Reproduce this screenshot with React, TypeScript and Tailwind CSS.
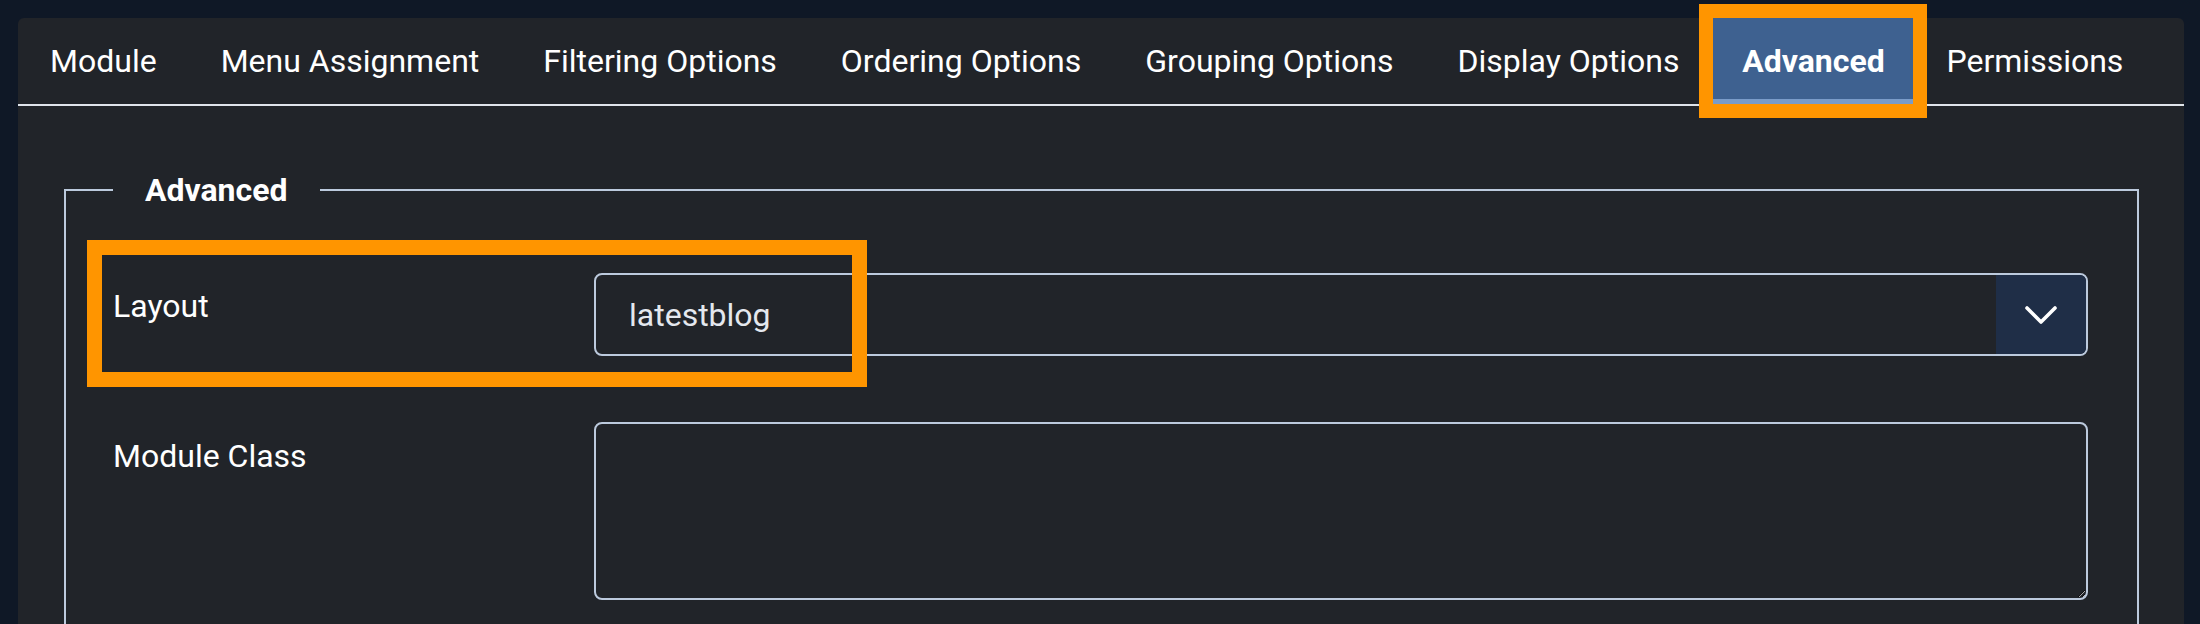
const tabs = [
  'Module',
  'Menu Assignment',
  'Filtering Options',
  'Ordering Options',
  'Grouping Options',
  'Display Options',
  'Advanced',
  'Permissions',
];

export default function App() {
  return (
    <div className="h-[624px] overflow-hidden bg-[#0f1826] pt-[18px] pl-[18px] pr-[16px] font-['Roboto',sans-serif]">
      <div className="h-[700px] rounded-[6px] bg-[#212429]">
        {/* tab bar */}
        <div className="flex border-b-2 border-[#dfe4ea]">
          {tabs.map((tab) =>
            tab === 'Advanced' ? (
              <div
                key={tab}
                className="relative ml-[2px] flex h-[86px] w-[200px] items-center justify-center bg-[#3e6190] text-[32px] font-bold text-white outline-[14px] outline-solid outline-[#ff9500]"
              >
                {tab}
                <span className="absolute bottom-0 left-0 h-[5px] w-full bg-[#7a9cc9]" />
              </div>
            ) : (
              <div
                key={tab}
                className={`flex h-[86px] items-center text-[32px] text-white ${
                  tab === 'Permissions' ? 'pl-[33px] pr-[32px]' : 'px-[32px]'
                }`}
              >
                {tab}
              </div>
            )
          )}
        </div>

        {/* body */}
        <div className="pt-[60px] pl-[46px] pr-[45px]">
          <fieldset className="border-2 border-[#bccadd] pl-[47px] pr-[49px] pb-[80px]">
            <legend className="px-[32px] text-[32px] font-bold leading-[48px] text-white">Advanced</legend>

            <div className="pt-[59px]">
              <div className="relative flex">
                <label className="w-[481px] shrink-0 pt-[9px] text-[32px] leading-[48px] text-white">Layout</label>
                <div className="flex h-[83px] flex-1 rounded-[8px] border-2 border-[#bccadd]">
                  <div className="flex flex-1 items-center pl-[33px] text-[32px] text-[#e4e8ee]">latestblog</div>
                  <div className="flex w-[90px] items-center justify-center rounded-r-[6px] bg-[#1f2e47]">
                    <svg width="34" height="22" viewBox="0 0 34 22" fill="none">
                      <polyline
                        points="3,4 17,18 31,4"
                        stroke="#ffffff"
                        strokeWidth="3.6"
                        strokeLinecap="round"
                        strokeLinejoin="round"
                      />
                    </svg>
                  </div>
                </div>
                {/* annotation */}
                <div className="pointer-events-none absolute -left-[26px] -top-[33px] h-[147px] w-[780px] border-[15px] border-[#ff9500]" />
              </div>

              <div className="mt-[66px] flex">
                <label className="w-[481px] shrink-0 pt-[10px] text-[32px] leading-[48px] text-white">Module Class</label>
                <textarea className="h-[178px] flex-1 rounded-[8px] border-2 border-[#bccadd] bg-transparent [color-scheme:dark]" />
              </div>
            </div>
          </fieldset>
        </div>
      </div>
    </div>
  );
}
